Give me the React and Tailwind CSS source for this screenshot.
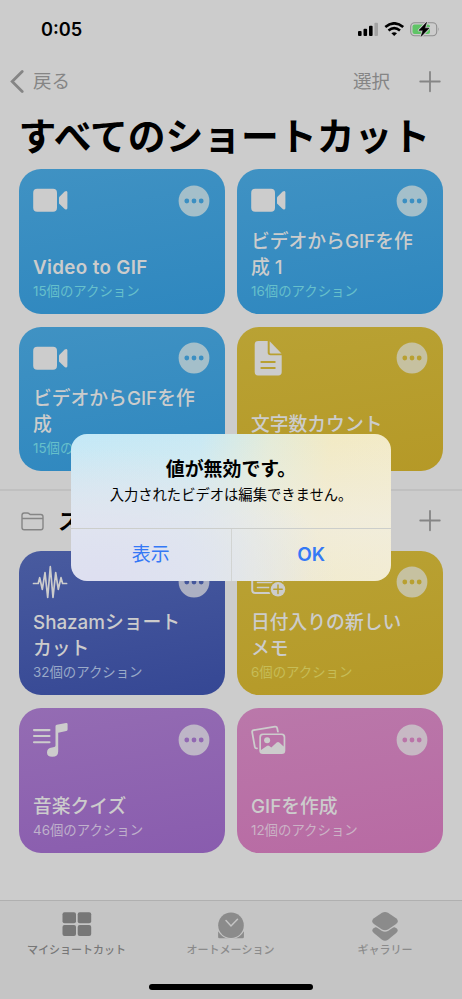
import { clsx } from 'clsx';

const shortcuts = [
  { title: 'Video to GIF', actions: '15個のアクション', icon: 'video', color: 'blue' },
  { title: 'ビデオからGIFを作\n成 1', actions: '16個のアクション', icon: 'video', color: 'blue' },
  { title: 'ビデオからGIFを作\n成', actions: '15個のアクション', icon: 'video', color: 'blue' },
  { title: '文字数カウント', actions: '7個のアクション', icon: 'doc', color: 'yellow' },
];

const starters = [
  { title: 'Shazamショート\nカット', actions: '32個のアクション', icon: 'wave', color: 'indigo' },
  { title: '日付入りの新しい\nメモ', actions: '6個のアクション', icon: 'memo', color: 'yellow' },
  { title: '音楽クイズ', actions: '46個のアクション', icon: 'music', color: 'purple' },
  { title: 'GIFを作成', actions: '12個のアクション', icon: 'photos', color: 'pink' },
];

const colors = {
  blue: {
    card: 'bg-[linear-gradient(170deg,#4092c3,#2e87bf)] text-[#3b8fc2]',
    more: 'text-[#a4bfca]',
    sub: 'text-[#67c0cb]',
  },
  yellow: {
    card: 'bg-[linear-gradient(170deg,#b9a234,#b59927)] text-[#b8a031]',
    more: 'text-[#c6c1a0]',
    sub: 'text-[#c6bd58]',
  },
  indigo: {
    card: 'bg-[linear-gradient(170deg,#495b9f,#354794)] text-[#44569b]',
    more: 'text-[#acb0c3]',
    sub: 'text-[#9aaac8]',
  },
  purple: {
    card: 'bg-[linear-gradient(170deg,#946cb3,#895cae)] text-[#9168b2]',
    more: 'text-[#beb6c7]',
    sub: 'text-[#bfb1cb]',
  },
  pink: {
    card: 'bg-[linear-gradient(170deg,#ba78aa,#b86aa3)] text-[#ba74a8]',
    more: 'text-[#c7b9c4]',
    sub: 'text-[#cbb3c6]',
  },
};

const CardIcon = ({ name }) => (
  <svg width="36" height="36" viewBox="0 0 36 36" fill="#cccccc" className="overflow-visible">
    {name === 'video' && (
      <>
        <rect x="0.2" y="5.7" width="23.8" height="23" rx="4" />
        <path d="M26 14.2 31.7 8.6Q34.4 6.9 34.4 9.6V24.8Q34.4 27.6 31.7 25.9L26 20.4Z" />
      </>
    )}
    {name === 'doc' && (
      <>
        <path d="M7.4 0H16.7V11.5Q16.7 14.3 19.5 14.3H30.7V31Q30.7 34.4 27.3 34.4H7Q3.7 34.4 3.7 31V3.4Q3.7 0 7.4 0Z" />
        <path d="M18.7 .3 30.5 12.4H19.7Q18.7 12.4 18.7 11.4Z" />
        <path d="M10.3 21H23.8M10.3 27H23.8" stroke="currentColor" strokeWidth="1.9" strokeLinecap="round" />
      </>
    )}
    {name === 'wave' && (
      <path
        d="M.5 18.5H5.2L6.7 12.7 9.3 24.3 12 7.7 14.7 32.5 17.3 1.7 20 32.5 22.7 7.7 25.3 24.3 28 12.7 29.6 18.5H33.6"
        fill="none"
        stroke="#cccccc"
        strokeWidth="1.7"
        strokeLinejoin="round"
        strokeLinecap="round"
      />
    )}
    {name === 'memo' && (
      <>
        <rect x="1.2" y="4" width="30" height="24" rx="3" fill="none" stroke="#cccccc" strokeWidth="2" />
        <path d="M6.5 12H25M6.5 17.5H23M6.5 22.5H18" stroke="#cccccc" strokeWidth="1.6" strokeLinecap="round" />
        <circle cx="27" cy="24.3" r="9" fill="currentColor" />
        <circle cx="27" cy="24.3" r="7.2" />
        <path d="M22.8 24.3H31.2M27 20.1V28.5" stroke="currentColor" strokeWidth="1.5" strokeLinecap="round" />
      </>
    )}
    {name === 'music' && (
      <>
        <path d="M1 8.1H16.5M1 14H16.5M1 20.2H16.5" stroke="#cccccc" strokeWidth="2.1" strokeLinecap="round" />
        <path d="M22.5 4.3Q22.5 3 23.8 2.8L33 1Q34.6.7 34.6 2.2V7.5Q34.6 8.8 33.3 9L25.2 10.7V29.2Q25.2 34.8 19.3 34.8 14 34.8 14 30.4 14 26 19 25.4L21.3 25Q22.5 24.7 22.5 23.5Z" />
      </>
    )}
    {name === 'photos' && (
      <>
        <path
          d="M26.9 9.6 26.2 6.3Q25.8 4.4 23.9 4.7L2.8 8.1Q.9 8.4 1.2 10.3L3.8 24.9Q4.1 26.6 6 26.3"
          fill="none"
          stroke="#cccccc"
          strokeWidth="1.8"
          strokeLinecap="round"
        />
        <rect x="8.3" y="11.4" width="26" height="20.6" rx="3.5" />
        <path
          d="M12.5 13.1H30.2Q32.6 13.1 32.6 15.5V24.6L28.3 20.5Q27 19.3 25.7 20.5L20.3 25.4 18.3 24Q17 23.1 15.8 24.1L10 28V15.5Q10 13.1 12.5 13.1Z"
          fill="currentColor"
        />
        <circle cx="16.1" cy="18.3" r="3" />
      </>
    )}
  </svg>
);

const ShortcutCard = ({ item }) => {
  const color = colors[item.color];

  return (
    <div className={clsx('flex h-[144.5px] flex-col justify-between rounded-[22px] pt-[14px] pr-[15px] pb-[12px] pl-[14px]', color.card)}>
      <div className="flex justify-between">
        <CardIcon name={item.icon} />
        <svg width="32" height="32" viewBox="0 0 32 32" fill="currentColor" className="mt-[1.5px]">
          <circle cx="16" cy="16" r="15.4" className={color.more} />
          <circle cx="8.8" cy="16" r="2.4" />
          <circle cx="16" cy="16" r="2.4" />
          <circle cx="23.2" cy="16" r="2.4" />
        </svg>
      </div>
      <div className="whitespace-pre">
        <h3
          className={clsx(
            'text-[18.8px] leading-[26px] text-[#cccccc]',
            item.title === 'Video to GIF' ? 'font-semibold tracking-[0.35px]' : 'font-medium'
          )}
        >
          {item.title}
        </h3>
        <p className={clsx('text-[13.4px] leading-[21px]', color.sub)}>{item.actions}</p>
      </div>
    </div>
  );
};

const StatusBar = () => (
  <div className="flex h-[60px] items-center justify-between pr-[22px] pl-[41px]">
    <span className="text-[18.2px] font-semibold">0:05</span>
    <svg width="83" height="16" viewBox="0 0 83 16">
      <rect x="1" y="9" width="3.6" height="5" rx="1" />
      <rect x="6.5" y="6.7" width="3.6" height="7.3" rx="1" />
      <rect x="12" y="3.7" width="3.6" height="10.3" rx="1" />
      <rect x="17.4" y="0.7" width="3.6" height="13.3" rx="1" fill="#a3a3a3" />
      <g fill="none" stroke="#000" strokeWidth="2.6">
        <path d="M28.3 5.1Q37.2-2.5 46.2 5.1" />
        <path d="M31.5 8.6Q37.2 3.8 43 8.6" />
      </g>
      <path d="M34.4 11.3Q37.2 9 40 11.3L37.2 14.1Z" />
      <rect x="53.7" y="0.8" width="26" height="13" rx="4" fill="none" stroke="#8f8f8f" strokeWidth="1.1" />
      <path d="M81.2 5.2Q82.7 7.3 81.2 9.4Z" fill="#8f8f8f" />
      <rect x="55.5" y="2.6" width="17.5" height="9.4" rx="2" fill="#5fc466" />
      <path d="M69.5.4 62 8.3H66L64.2 14.3 72 6.2H67.7Z" stroke="#cccccc" strokeWidth="2.4" strokeLinejoin="round" />
      <path d="M69.5.4 62 8.3H66L64.2 14.3 72 6.2H67.7Z" stroke="#000" strokeWidth=".6" />
    </svg>
  </div>
);

const PlusIcon = () => (
  <svg width="22" height="22" viewBox="0 0 22 22" stroke="#858585" strokeWidth="1.8" strokeLinecap="round">
    <path d="M1.2 10.5H20.8M11 .9V20.3" />
  </svg>
);

const Alert = () => (
  <div className="absolute top-[433.5px] left-[71px] flex h-[147px] w-[320px] flex-col overflow-hidden rounded-[16px] bg-[radial-gradient(75%_90%_at_8%_100%,#dedff0_0%,rgba(224,226,240,0.85)_40%,rgba(230,232,240,0)_100%),linear-gradient(to_bottom,rgba(238,238,236,0)_0%,rgba(240,238,232,0.6)_60%,rgba(240,238,232,0.3)_100%),linear-gradient(100deg,#c3e8f7_0%,#c9e9f4_38%,#e4ebd8_58%,#f2eac4_76%,#f3ebc9_100%)] text-center">
    <div className="flex h-[94.5px] flex-col pt-[22px]">
      <h2 className="text-[18.9px] leading-[27px] font-semibold">値が無効です。</h2>
      <p className="-mx-2 text-[14.3px] leading-[24px]">入力されたビデオは編集できません。</p>
    </div>
    <div className="flex flex-1 border-t border-[#cccecb] text-[18.9px] text-[#3478f6]">
      <button className="flex-1 border-r border-[#d2d4d2]">表示</button>
      <button className="flex-1 font-semibold">OK</button>
    </div>
  </div>
);

const TabBar = () => (
  <div className="flex h-[99px] flex-col border-t border-[#b0b0b0] bg-[#c5c5c5] text-[11px] leading-[16px] font-medium text-[#8b8b8b]">
    <div className="grid flex-1 grid-cols-[153px_155px_154px] pt-[10px]">
      <div className="flex flex-col items-center gap-px text-[#777777]">
        <svg width="30" height="30" viewBox="0 0 30 30" fill="currentColor">
          <rect x="0.5" y="1.3" width="13.5" height="11" rx="2" />
          <rect x="15.7" y="1.3" width="13.5" height="11" rx="2" />
          <rect x="0.5" y="14" width="13.5" height="11" rx="2" />
          <rect x="15.7" y="14" width="13.5" height="11" rx="2" />
        </svg>
        <span>マイショートカット</span>
      </div>
      <div className="flex flex-col items-center gap-px">
        <svg width="30" height="30" viewBox="0 0 30 30" fill="currentColor">
          <path d="M2.1 20.5V26Q2.1 27.2 3.3 27.2H26.7Q27.9 27.2 27.9 26V20.5Z" />
          <circle cx="15" cy="14.2" r="14" fill="#c5c5c5" />
          <circle cx="15" cy="14.2" r="12.8" />
          <path d="M10 9.5 15 15 21.5 8.3" fill="none" stroke="#c5c5c5" strokeWidth="1.5" strokeLinecap="round" />
        </svg>
        <span>オートメーション</span>
      </div>
      <div className="flex flex-col items-center gap-px">
        <svg width="30" height="30" viewBox="0 0 30 30" fill="currentColor">
          <path d="M5.5 16.3H24.5L26.5 17.3Q29 19.6 26.2 22L18 28.8Q15 30.8 12 28.8L3.8 22Q1 19.6 3.5 17.3Z" />
          <path
            d="M12 1.8Q15 .4 18 1.8L26.1 7.3Q29.7 10.2 26.1 13.1L18 18.6Q15 20.1 12 18.6L3.9 13.1Q.3 10.2 3.9 7.3Z"
            transform="translate(0 1.4)"
            fill="#c5c5c5"
          />
          <path d="M12 1.8Q15 .4 18 1.8L26.1 7.3Q29.7 10.2 26.1 13.1L18 18.6Q15 20.1 12 18.6L3.9 13.1Q.3 10.2 3.9 7.3Z" />
        </svg>
        <span>ギャラリー</span>
      </div>
    </div>
    <div className="mx-auto mb-[9px] h-[6.5px] w-[164px] rounded-full bg-black" />
  </div>
);

const App = () => {
  return (
    <div className="relative flex h-[999px] w-[462px] flex-col overflow-hidden bg-[#cccccc] font-['Inter','Noto_Sans_CJK_JP',sans-serif] text-black">
      <StatusBar />
      <nav className="flex h-[44px] items-center pr-[21px] pl-[10px] text-[18.5px] text-[#858585]">
        <svg width="14" height="24" viewBox="0 0 14 24" fill="none" stroke="#858585" strokeWidth="2.8" strokeLinecap="round">
          <path d="M12.2 1.5 2.2 11.5 12.2 21.5" />
        </svg>
        <span className="ml-[9px]">戻る</span>
        <span className="mr-[29px] ml-auto">選択</span>
        <PlusIcon />
      </nav>
      <h1 className="h-[65.3px] pl-[18.5px] text-[37.8px] leading-[64px] font-semibold whitespace-nowrap">すべてのショートカット</h1>
      <div className="grid grid-cols-2 gap-x-[12px] gap-y-[13px] px-[19px]">
        {shortcuts.map((item, i) => (
          <ShortcutCard key={i} item={item} />
        ))}
      </div>
      <div className="mt-[18px] h-[2px] bg-[#c0c0c0]" />
      <div className="flex h-[59.7px] items-center pr-[21px] pl-[21px]">
        <svg width="23" height="19" viewBox="0 0 23 19" fill="none" stroke="#858585" strokeWidth="1.4">
          <path d="M1 15.5V3.2Q1 1 3.2 1H6.4Q7.4 1 8.1 1.6L9.2 2.5H19.8Q22 2.5 22 4.7V15.5Q22 17.7 19.8 17.7H3.2Q1 17.7 1 15.5ZM1 6.5H22" />
        </svg>
        <h2 className="ml-[14px] text-[22px] font-bold">スターターショートカット</h2>
        <div className="ml-auto">
          <PlusIcon />
        </div>
      </div>
      <div className="grid flex-1 grid-cols-2 content-start gap-x-[12px] gap-y-[13px] px-[19px]">
        {starters.map((item) => (
          <ShortcutCard key={item.title} item={item} />
        ))}
      </div>
      <TabBar />
      <Alert />
    </div>
  );
};

export default App;
